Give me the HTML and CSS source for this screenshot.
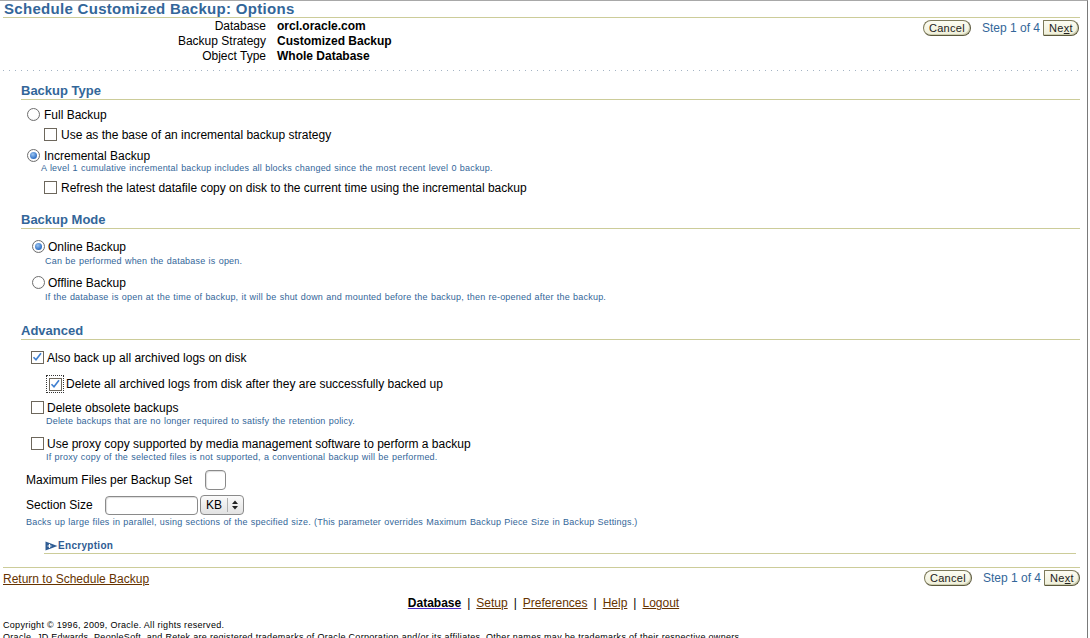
FILE: index.html
```html
<!DOCTYPE html>
<html>
<head>
<meta charset="utf-8">
<link rel="stylesheet" href="styles.css">
</head>
<body>
<div class="page">
  <h1 class="title">Schedule Customized Backup: Options</h1>
  <div class="head">
    <div class="info">
      <div class="lbl">Database</div><div class="val">orcl.oracle.com</div>
      <div class="lbl">Backup Strategy</div><div class="val">Customized Backup</div>
      <div class="lbl">Object Type</div><div class="val">Whole Database</div>
    </div>
    <div class="nav">
      <span class="btn cancel">Cancel</span>
      <span class="step">Step 1 of 4</span>
      <span class="btn next">Ne<u>x</u>t</span>
    </div>
  </div>
  <div class="dots"></div>

  <div class="content">
    <h2 class="sec">Backup Type</h2>
    <div class="row r-full"><span class="radio"></span><span class="txt">Full Backup</span></div>
    <div class="row r-base"><span class="cb"></span><span class="txt">Use as the base of an incremental backup strategy</span></div>
    <div class="row r-incr"><span class="radio on"></span><span class="txt">Incremental Backup</span></div>
    <div class="help h-incr">A level 1 cumulative incremental backup includes all blocks changed since the most recent level 0 backup.</div>
    <div class="row r-refresh"><span class="cb"></span><span class="txt">Refresh the latest datafile copy on disk to the current time using the incremental backup</span></div>

    <h2 class="sec sec-mode">Backup Mode</h2>
    <div class="row r-online"><span class="radio on"></span><span class="txt">Online Backup</span></div>
    <div class="help h-mode">Can be performed when the database is open.</div>
    <div class="row r-offline"><span class="radio"></span><span class="txt">Offline Backup</span></div>
    <div class="help h-mode">If the database is open at the time of backup, it will be shut down and mounted before the backup, then re-opened after the backup.</div>

    <h2 class="sec sec-adv">Advanced</h2>
    <div class="row r-arch"><span class="cb checked"><svg viewBox="0 0 12 12" width="12" height="12"><path d="M2.5 6.2 L5 8.8 L10 2.2" fill="none" stroke="#3f7fd0" stroke-width="1.6"/></svg></span><span class="txt">Also back up all archived logs on disk</span></div>
    <div class="row r-del"><span class="focus"><span class="cb checked"><svg viewBox="0 0 12 12" width="12" height="12"><path d="M2.5 6.2 L5 8.8 L10 2.2" fill="none" stroke="#3f7fd0" stroke-width="1.6"/></svg></span></span><span class="txt">Delete all archived logs from disk after they are successfully backed up</span></div>
    <div class="row r-obs"><span class="cb"></span><span class="txt">Delete obsolete backups</span></div>
    <div class="help h-adv">Delete backups that are no longer required to satisfy the retention policy.</div>
    <div class="row r-proxy"><span class="cb"></span><span class="txt">Use proxy copy supported by media management software to perform a backup</span></div>
    <div class="help h-adv">If proxy copy of the selected files is not supported, a conventional backup will be performed.</div>

    <div class="field f-max"><span class="flabel">Maximum Files per Backup Set</span><span class="inp inp-small"></span></div>
    <div class="field f-sec"><span class="flabel">Section Size</span><span class="inp inp-size"></span><span class="sel">KB<span class="spin"><svg viewBox="0 0 8 12" width="8" height="12"><path d="M4 1.5 L7 5 L1 5 Z M4 10.5 L7 7 L1 7 Z" fill="#222"/></svg></span></span></div>
    <div class="help h-sec">Backs up large files in parallel, using sections of the specified size. (This parameter overrides Maximum Backup Piece Size in Backup Settings.)</div>

    <div class="enc"><svg class="enc-ic" viewBox="0 0 13 10" width="13" height="10"><path d="M0.5 0.5 L12.5 5 L0.5 9.5 Z" fill="#2f5c93"/><path d="M2.5 5 H6.5 M4.5 3 V7" stroke="#fff" stroke-width="1.2"/></svg><span class="enc-t">Encryption</span></div>
  </div>

  <div class="foot-bar">
    <a class="link" href="#">Return to Schedule Backup</a>
    <div class="nav">
      <span class="btn cancel">Cancel</span>
      <span class="step">Step 1 of 4</span>
      <span class="btn next">Ne<u>x</u>t</span>
    </div>
  </div>

  <div class="global">
    <a class="cur" href="#">Database</a><span class="pipe">|</span><a class="link" href="#">Setup</a><span class="pipe">|</span><a class="link" href="#">Preferences</a><span class="pipe">|</span><a class="link" href="#">Help</a><span class="pipe">|</span><a class="link" href="#">Logout</a>
  </div>

  <div class="copy c1">Copyright © 1996, 2009, Oracle. All rights reserved.</div>
  <div class="copy">Oracle, JD Edwards, PeopleSoft, and Retek are registered trademarks of Oracle Corporation and/or its affiliates. Other names may be trademarks of their respective owners.</div>
</div>
</body>
</html>
```

FILE: styles.css
```css
html, body {
  margin: 0;
  padding: 0;
  background: #fff;
  overflow: hidden;
}
body {
  font-family: "Liberation Sans", Arial, sans-serif;
  font-size: 12px;
  color: #000;
}
.page {
  width: 1087px;
  height: 700px;
  border-top: 1px solid #a8a8a8;
  border-right: 1px solid #7a7a7a;
}
.title {
  margin: 0 7px 0 3px;
  padding-left: 1px;
  font-size: 15px;
  letter-spacing: 0.3px;
  line-height: 16px;
  font-weight: bold;
  color: #336699;
  border-bottom: 1px solid #cccc99;
}
.head {
  display: flex;
  justify-content: space-between;
  align-items: flex-start;
  padding-top: 1px;
}
.info {
  display: grid;
  grid-template-columns: 266px auto;
  column-gap: 11px;
  line-height: 15px;
}
.lbl { text-align: right; }
.val { font-weight: bold; }
.nav {
  display: flex;
  align-items: center;
  padding-right: 8px;
  padding-top: 1px;
}
.btn {
  display: inline-block;
  height: 14px;
  line-height: 14px;
  border: 1px solid #7d7a5a;
  border-right-color: #5a573c;
  border-bottom-color: #5a573c;
  background: linear-gradient(#fcfcf2, #efefd9);
  color: #222;
  font-size: 11px;
  letter-spacing: 0.3px;
  text-align: center;
  box-shadow: inset -1px -1px 0 #cfcfb0;
}
.cancel {
  width: 46px;
  border-radius: 8px;
}
.next {
  width: 34px;
  border-radius: 1px 8px 8px 1px;
}
.step {
  color: #336699;
  margin: 0 3px 0 11px;
  font-size: 12px;
}
.dots {
  margin: 6px 8px 0 3px;
  height: 1px;
  background: repeating-linear-gradient(to right, #a4b4c4 0 1px, transparent 1px 6px);
}
.content {
  padding: 0 7px 0 21px;
}
.sec {
  margin: 12px 0 0 0;
  font-size: 13px;
  line-height: 16px;
  font-weight: bold;
  color: #336699;
  border-bottom: 1px solid #cccc99;
}
.sec-mode { margin-top: 16px; }
.sec-adv { margin-top: 20px; }
.row {
  display: flex;
  align-items: center;
  height: 16px;
}
.txt { line-height: 16px; }
.radio {
  width: 11px;
  height: 11px;
  border: 1px solid #6e6e6e;
  border-radius: 50%;
  background: radial-gradient(circle at 50% 40%, #fff 55%, #e6e6e6);
  position: relative;
  top: -1px;
  flex: none;
}
.radio.on::after {
  content: "";
  position: absolute;
  left: 2px;
  top: 2px;
  width: 7px;
  height: 7px;
  border-radius: 50%;
  background: radial-gradient(circle at 40% 35%, #9cc6f2, #2f6fc4 70%);
}
.cb {
  width: 11px;
  height: 11px;
  border: 1px solid #6d675c;
  background: #fff;
  position: relative;
  top: -1px;
  flex: none;
}
.cb svg { position: absolute; left: -1px; top: -1px; }
.r-full { padding-left: 6px; margin-top: 7px; gap: 4px; }
.r-base { padding-left: 23px; margin-top: 4px; gap: 4px; }
.r-incr { padding-left: 6px; margin-top: 5px; gap: 4px; }
.r-refresh { padding-left: 23px; margin-top: 6px; gap: 4px; }
.help {
  font-size: 9px;
  line-height: 11px;
  color: #336699;
  letter-spacing: 0.2px;
  word-spacing: 0.5px;
}
.h-incr { padding-left: 20px; margin-top: -1px; }
.r-online { padding-left: 11px; margin-top: 10px; gap: 3px; }
.h-mode { padding-left: 24px; margin-top: 1px; }
.r-offline { padding-left: 11px; margin-top: 8px; gap: 3px; }
.r-arch { padding-left: 10px; margin-top: 10px; gap: 3px; }
.r-del { padding-left: 25px; margin-top: 9px; height: 18px; gap: 2px; }
.focus {
  display: flex;
  align-items: center;
  justify-content: center;
  width: 16px;
  height: 16px;
  border: 1px dotted #333;
}
.focus .cb { top: 0; }
.r-obs { padding-left: 10px; margin-top: 7px; gap: 3px; }
.h-adv { padding-left: 25px; margin-top: 0; }
.r-proxy { padding-left: 10px; margin-top: 9px; gap: 3px; }
.field {
  display: flex;
  align-items: center;
  padding-left: 5px;
}
.f-max { margin-top: 7px; height: 20px; }
.f-max .flabel { margin-right: 13px; }
.f-sec { margin-top: 5px; height: 20px; }
.f-sec .flabel { width: 79px; }
.inp {
  display: inline-block;
  border: 1px solid #8a8a8a;
  border-radius: 4px;
  background: #fff;
  box-shadow: inset 1px 1px 1px #ddd;
}
.inp-small { width: 19px; height: 18px; }
.inp-size { width: 91px; height: 17px; }
.sel {
  display: flex;
  align-items: center;
  margin-left: 2px;
  width: 44px;
  border: 1px solid #8a8a8a;
  border-radius: 4px;
  background: linear-gradient(#fafafa, #e2e2e2);
  padding-left: 5px;
  box-sizing: border-box;
  height: 20px;
  font-size: 12px;
}
.spin {
  margin-left: 5px;
  padding-left: 3px;
  border-left: 1px solid #b0b0b0;
  height: 14px;
  display: flex;
  align-items: center;
}
.h-sec { padding-left: 5px; margin-top: 2px; }
.enc {
  display: flex;
  align-items: center;
  margin: 11px 4px 0 23px;
  height: 13px;
  border-bottom: 1px solid #cccc99;
  padding-bottom: 1px;
}
.enc-ic { margin-left: 1px; }
.enc-t {
  font-size: 10px;
  font-weight: bold;
  color: #2f5c93;
  letter-spacing: 0.3px;
}
.foot-bar {
  display: flex;
  justify-content: space-between;
  align-items: flex-start;
  margin: 13px 7px 0 3px;
  border-top: 1px solid #cccc99;
  padding-top: 2px;
}
.foot-bar .nav { padding-right: 0; padding-top: 0; }
.foot-bar .link { margin-top: 2px; line-height: 15px; }
.link {
  color: #663300;
  text-decoration: underline;
}
.global {
  text-align: center;
  margin-top: 8px;
  line-height: 16px;
}
.pipe { margin: 0 6px; }
.cur {
  color: #000;
  font-weight: bold;
  text-decoration: underline;
  text-decoration-color: #4b2cc7;
}
.copy {
  font-size: 9px;
  line-height: 12px;
  padding-left: 3px;
  letter-spacing: 0.3px;
}
.c1 { margin-top: 8px; }
```
